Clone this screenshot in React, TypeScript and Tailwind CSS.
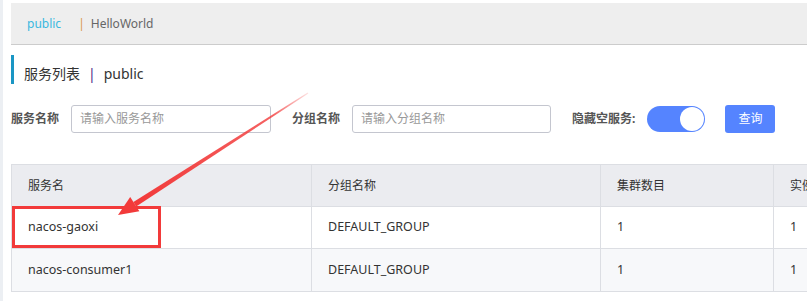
import React from "react";

const font = "font-['Noto_Sans','Noto_Sans_CJK_SC',sans-serif]";

export default function App() {
  const rows = [
    { name: "nacos-gaoxi", group: "DEFAULT_GROUP", cluster: "1", inst: "1", bg: "bg-white" },
    { name: "nacos-consumer1", group: "DEFAULT_GROUP", cluster: "1", inst: "1", bg: "bg-[#f7f8fa]" },
  ];

  // arrow geometry
  const tail = [308, 93];
  const tip = [118, 215];
  const dx = tip[0] - tail[0];
  const dy = tip[1] - tail[1];
  const len = Math.hypot(dx, dy);
  const u = [dx / len, dy / len];
  const n = [-u[1], u[0]];
  const neck = [tip[0] - 20 * u[0], tip[1] - 20 * u[1]];
  const p = (a: number[], k: number) => `${(a[0] + k * n[0]).toFixed(1)},${(a[1] + k * n[1]).toFixed(1)}`;
  const shaft = [p(tail, 0.6), p(neck, 2.6), p(neck, -2.6), p(tail, -0.6)].join(" ");
  const head = [`${tip[0]},${tip[1]}`, p(neck, 8.5), p(neck, -8.5)].join(" ");

  return (
    <div className={`relative w-[807px] h-[301px] overflow-hidden bg-white ${font}`}>
      <div className="absolute left-0 top-0 h-full w-[3px] bg-[#eceff3]" />
      <div className="pl-[11px] pt-[3px] w-[1000px]">
        {/* breadcrumb bar */}
        <div className="h-[42px] bg-[#eeeeee] border-b border-[#cccccc] flex items-center pl-[16px] text-[12px]">
          <span className="text-[#3ab8df]">public</span>
          <span className="ml-[17px] text-[#d9964a]">|</span>
          <span className="ml-[6px] text-[#666666]">HelloWorld</span>
        </div>

        {/* title */}
        <div className="mt-[10px] h-[29px] border-l-[3px] border-[#1a96c4] flex items-center pl-[10px] pt-[7px] text-[14px] text-[#333333]">
          <span>服务列表</span>
          <span className="mx-[8px] text-[#4b1f87]">|</span>
          <span>public</span>
        </div>

        {/* form */}
        <div className="mt-[21px] flex items-center h-[28px] text-[12px]">
          <span className="font-bold text-[#555555]">服务名称</span>
          <div className="ml-[12px] w-[200px] h-[28px] border border-[#c4c6cf] rounded-[3px] flex items-center pl-[8px] text-[#999999]">
            请输入服务名称
          </div>
          <span className="ml-[21px] font-bold text-[#555555]">分组名称</span>
          <div className="ml-[12px] w-[199px] h-[28px] border border-[#c4c6cf] rounded-[3px] flex items-center pl-[8px] text-[#999999]">
            请输入分组名称
          </div>
          <span className="ml-[21px] font-bold text-[#555555]">隐藏空服务:</span>
          <div className="ml-[12px] w-[58px] h-[26px] rounded-full bg-[#5584ff] flex items-center justify-end pr-[1px]">
            <div className="w-[24px] h-[24px] rounded-full bg-white" />
          </div>
          <div className="ml-[20px] w-[50px] h-[28px] rounded-[3px] bg-[#5584ff] text-white flex items-center justify-center">
            查询
          </div>
        </div>

        {/* table */}
        <div className="mt-[31px] w-[900px] border border-[#dcdee3] text-[12px] text-[#333333]">
          <div className="flex h-[42px] bg-[#ebecf0] border-b border-[#dcdee3]">
            <div className="w-[300px] border-r border-[#dcdee3] flex items-center pl-[16px]">服务名</div>
            <div className="w-[289px] border-r border-[#dcdee3] flex items-center pl-[16px]">分组名称</div>
            <div className="w-[173px] border-r border-[#dcdee3] flex items-center pl-[16px]">集群数目</div>
            <div className="flex-1 flex items-center pl-[16px]">实例数</div>
          </div>
          {rows.map((r, i) => (
            <div key={i} className={`flex h-[42px] ${r.bg} ${i === 0 ? "border-b border-[#dcdee3]" : ""} text-[12.5px]`}>
              <div className="w-[300px] border-r border-[#dcdee3] flex items-center pl-[16px]">{r.name}</div>
              <div className="w-[289px] border-r border-[#dcdee3] flex items-center pl-[16px]">{r.group}</div>
              <div className="w-[173px] border-r border-[#dcdee3] flex items-center pl-[16px]">{r.cluster}</div>
              <div className="flex-1 flex items-center pl-[16px]">{r.inst}</div>
            </div>
          ))}
        </div>
      </div>

      {/* annotation overlay */}
      <svg className="absolute inset-0 pointer-events-none" width="807" height="301" viewBox="0 0 807 301">
        <defs>
          <linearGradient id="g" gradientUnits="userSpaceOnUse" x1={tail[0]} y1={tail[1]} x2={neck[0]} y2={neck[1]}>
            <stop offset="0" stopColor="#f23a3a" stopOpacity="0.15" />
            <stop offset="0.2" stopColor="#f23a3a" stopOpacity="0.8" />
            <stop offset="1" stopColor="#f23a3a" stopOpacity="1" />
          </linearGradient>
        </defs>
        <rect x="13.5" y="207.5" width="146" height="39" fill="none" stroke="#f23a3a" strokeWidth="3" />
        <polygon points={shaft} fill="url(#g)" />
        <polygon points={head} fill="#f23a3a" />
      </svg>
    </div>
  );
}
